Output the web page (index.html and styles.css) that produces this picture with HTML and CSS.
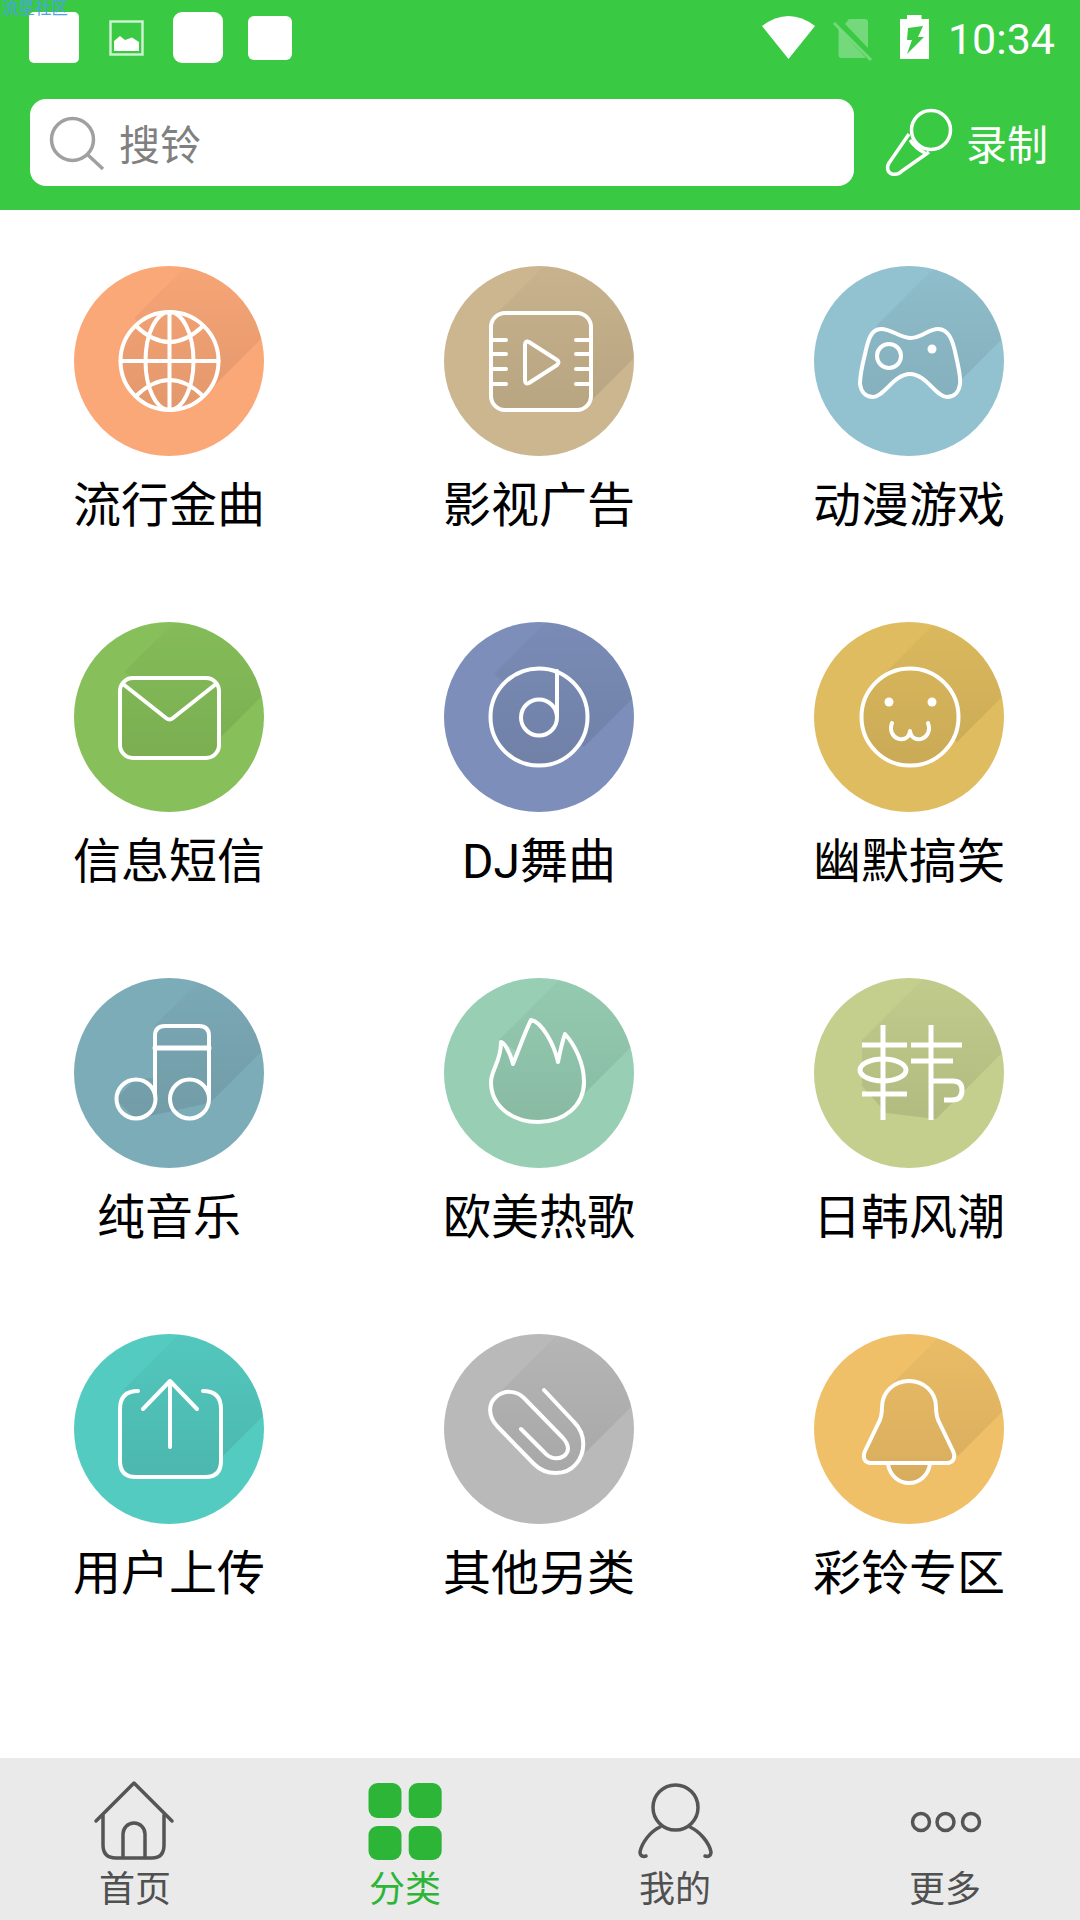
FILE: index.html
```html
<!DOCTYPE html>
<html lang="zh-CN">
<head>
<meta charset="utf-8">
<title>铃声分类</title>
<link rel="stylesheet" href="styles.css">
</head>
<body>
<div class="app">
  <header class="header">
    <span class="watermark">流星社区</span>
    <div class="status">
      <div class="status-left">
        <span class="slot"><span class="sq sq-a"></span></span>
        <span class="slot">
          <svg class="img-icon" viewBox="0 0 35 36"><rect class="img-frame" x="1.5" y="1.5" width="32" height="33"/><path class="white" d="M5 31V21L11 16L16 20L23 17.5L30 22V31Z"/></svg>
        </span>
        <span class="slot"><span class="sq sq-b"></span></span>
        <span class="slot"><span class="sq sq-c"></span></span>
      </div>
      <div class="status-right">
        <svg class="st-wifi" viewBox="0 0 53 43"><path class="white" d="M0 10Q26.500 -10 53 10L26.500 43Z"/></svg>
        <svg class="st-sim" viewBox="0 0 40 44"><path class="faded" d="M12 7L16 2H32Q35 2 35 5V31Z"/><path class="faded" d="M5.500 12V38Q5.500 41 8.500 41H33Z"/><path class="faded-line" d="M1 6L38 43"/></svg>
        <svg class="st-batt" viewBox="0 0 29 44"><path class="white" fill-rule="evenodd" d="M7 0H21.500V4H29V44H0V4H7ZM8 13L7 25H12L7 39L24 22H18L23 11Z"/></svg>
        <span class="clock">10:34</span>
      </div>
    </div>
    <div class="search-row">
      <div class="search">
        <svg class="search-icon" viewBox="0 0 54 52"><circle class="search-line" cx="22.500" cy="22.500" r="21"/><path class="search-line" d="M38 38L53 52"/></svg>
        <span class="search-text">搜铃</span>
      </div>
      <div class="record">
        <svg class="mic" viewBox="0 0 68 68"><circle class="mic-line" cx="45" cy="21" r="19.500"/><path class="mic-line" d="M23 25L3 54C0 59 2 64 6 65C10 66 13 65 16 62L43 43M24 31C28 37 33 41 39 44"/></svg>
        <span class="record-text">录制</span>
      </div>
    </div>
  </header>

  <main class="grid">
    <div class="cat">
      <svg class="disc" viewBox="0 0 190 190">
        <defs>
          <linearGradient id="shade" gradientUnits="userSpaceOnUse" x1="0" y1="0" x2="0" y2="150"><stop offset="0" stop-color="#000" stop-opacity=".02"/><stop offset="1" stop-color="#000" stop-opacity=".1"/></linearGradient>
          <clipPath id="round"><circle cx="95" cy="95" r="95"/></clipPath>
          <clipPath id="s1"><polygon points="60,52 190,-78 260,0 130,130"/><circle cx="95.500" cy="95" r="49"/></clipPath>
          <clipPath id="s2"><polygon points="50,50 180,-80 277,5 147,135"/><rect x="47" y="47" width="100" height="97" rx="14"/></clipPath>
          <clipPath id="s3"><polygon points="62,60 192,-70 276,-15 146,115"/><path d="M67 63C78 63 86 72 97 72C108 72 114 63 124 63C135 63 139 75 142 90C145 103 147 112 146 118C145 126 140 131 133 131C122 131 112 108 96 108C80 108 70 131 59 131C52 131 47 126 46 118C46 110 48 100 51 88C54 74 57 63 67 63Z"/></clipPath>
          <clipPath id="s4"><polygon points="50,50 180,-80 275,-13 145,117"/><rect x="46" y="56" width="99" height="80" rx="13"/></clipPath>
          <clipPath id="s5"><polygon points="50,52 180,-78 270,-5 140,125"/><circle cx="95" cy="95" r="48.500"/></clipPath>
          <clipPath id="s6"><polygon points="62,60 192,-70 273,-10 143,120"/><circle cx="96" cy="95" r="48.500"/></clipPath>
          <clipPath id="s7"><polygon points="80,48 210,-82 266,-5 136,125"/><polygon points="81,48 135,48 135,125 62,141 41,121 62,101 81,100"/></clipPath>
          <clipPath id="s8"><polygon points="55,62 185,-68 270,-14 140,116"/><path d="M94 144C68 144 47 128 47 104C47 92 57 84 57 64C60 64 66 74 69 86C74 74 80 56 87 42C98 44 110 66 114 84C116 74 118 64 121 56C130 66 140 84 140 104C140 128 120 144 94 144Z"/></clipPath>
          <clipPath id="s9"><polygon points="48,62 178,-68 252,11 122,141"/><polygon points="48,62 48,108 72,135 122,141"/></clipPath>
          <clipPath id="s10"><polygon points="50,55 180,-75 276,-5 146,125"/><rect x="46" y="57" width="101" height="86" rx="16"/></clipPath>
          <clipPath id="s11"><polygon points="52,62 182,-68 272,-12 142,118"/><path d="M100 56L130 88C142 100 142 118 132 130C122 142 102 142 90 130L53 92C44 82 44 70 52 63C60 56 72 56 80 64Z"/></clipPath>
          <clipPath id="s12"><polygon points="78,50 208,-80 274,-8 144,122"/><path d="M95 47C110 47 122 58 122 73C122 80 123 85 126 90L139 117C142 124 139 129 133 129H116C114 142 105 149 95 149C85 149 76 142 74 129H57C51 129 48 124 51 117L64 90C67 85 68 80 68 73C68 58 80 47 95 47Z"/></clipPath>
        </defs>
        <circle class="c1" cx="95" cy="95" r="95"/>
        <g clip-path="url(#round)"><rect width="190" height="190" fill="url(#shade)" clip-path="url(#s1)"/></g>
        <circle class="line" cx="95.500" cy="95" r="49"/>
        <ellipse class="line" cx="95.500" cy="95" rx="24" ry="49"/>
        <path class="line" d="M95.500 46V144M46.500 95H144.500M62 60Q95.500 92 129 60M62 130Q95.500 98 129 130"/>
      </svg>
      <span class="label">流行金曲</span>
    </div>
    <div class="cat">
      <svg class="disc" viewBox="0 0 190 190">
        <circle class="c2" cx="95" cy="95" r="95"/>
        <g clip-path="url(#round)"><rect width="190" height="190" fill="url(#shade)" clip-path="url(#s2)"/></g>
        <rect class="line" x="47" y="47" width="100" height="97" rx="14"/>
        <path class="line" d="M47 74H62M47 88H62M47 103H62M47 118H62M132 74H147M132 88H147M132 103H147M132 118H147"/>
        <path class="line" d="M81 79Q81 74 85 76L113 94Q116 96 113 99L85 117Q81 119 81 114Z"/>
      </svg>
      <span class="label">影视广告</span>
    </div>
    <div class="cat">
      <svg class="disc" viewBox="0 0 190 190">
        <circle class="c3" cx="95" cy="95" r="95"/>
        <g clip-path="url(#round)"><rect width="190" height="190" fill="url(#shade)" clip-path="url(#s3)"/></g>
        <path class="line" d="M67 63C78 63 86 72 97 72C108 72 114 63 124 63C135 63 139 75 142 90C145 103 147 112 146 118C145 126 140 131 133 131C122 131 112 108 96 108C80 108 70 131 59 131C52 131 47 126 46 118C46 110 48 100 51 88C54 74 57 63 67 63Z"/>
        <circle class="line" cx="75" cy="90" r="12"/>
        <circle class="white" cx="118" cy="83" r="4.500"/>
      </svg>
      <span class="label">动漫游戏</span>
    </div>
    <div class="cat">
      <svg class="disc" viewBox="0 0 190 190">
        <circle class="c4" cx="95" cy="95" r="95"/>
        <g clip-path="url(#round)"><rect width="190" height="190" fill="url(#shade)" clip-path="url(#s4)"/></g>
        <rect class="line" x="46" y="56" width="99" height="80" rx="13"/>
        <path class="line" d="M49 62L92 96Q95.500 99 99 96L142 62"/>
      </svg>
      <span class="label">信息短信</span>
    </div>
    <div class="cat">
      <svg class="disc" viewBox="0 0 190 190">
        <circle class="c5" cx="95" cy="95" r="95"/>
        <g clip-path="url(#round)"><rect width="190" height="190" fill="url(#shade)" clip-path="url(#s5)"/></g>
        <circle class="line" cx="95" cy="95" r="48.500"/>
        <circle class="line" cx="95" cy="95.500" r="18"/>
        <path class="line" d="M113 95V49"/>
      </svg>
      <span class="label">DJ舞曲</span>
    </div>
    <div class="cat">
      <svg class="disc" viewBox="0 0 190 190">
        <circle class="c6" cx="95" cy="95" r="95"/>
        <g clip-path="url(#round)"><rect width="190" height="190" fill="url(#shade)" clip-path="url(#s6)"/></g>
        <circle class="line" cx="96" cy="95" r="48.500"/>
        <circle class="white" cx="75" cy="80" r="4.500"/>
        <circle class="white" cx="118" cy="80" r="4.500"/>
        <path class="line" d="M78 101C72 117 94 124 96 109C98 124 120 117 114 101"/>
      </svg>
      <span class="label">幽默搞笑</span>
    </div>
    <div class="cat">
      <svg class="disc" viewBox="0 0 190 190">
        <circle class="c7" cx="95" cy="95" r="95"/>
        <g clip-path="url(#round)"><rect width="190" height="190" fill="url(#shade)" clip-path="url(#s7)"/></g>
        <path class="line" d="M81 118V58Q81 48 91 48H125Q135 48 135 58V118"/>
        <path class="line line-thick" d="M81 70H135"/>
        <circle class="line" cx="62" cy="121" r="19.500"/>
        <circle class="line" cx="115.500" cy="121" r="19.500"/>
      </svg>
      <span class="label">纯音乐</span>
    </div>
    <div class="cat">
      <svg class="disc" viewBox="0 0 190 190">
        <circle class="c8" cx="95" cy="95" r="95"/>
        <g clip-path="url(#round)"><rect width="190" height="190" fill="url(#shade)" clip-path="url(#s8)"/></g>
        <path class="line" d="M94 144C68 144 47 128 47 104C47 92 57 84 57 64C60 64 66 74 69 86C74 74 80 56 87 42C98 44 110 66 114 84C116 74 118 64 121 56C130 66 140 84 140 104C140 128 120 144 94 144Z"/>
      </svg>
      <span class="label">欧美热歌</span>
    </div>
    <div class="cat">
      <svg class="disc" viewBox="0 0 190 190">
        <circle class="c9" cx="95" cy="95" r="95"/>
        <g clip-path="url(#round)"><rect width="190" height="190" fill="url(#shade)" clip-path="url(#s9)"/></g>
        <ellipse class="line-han" cx="69" cy="92" rx="23" ry="11"/>
        <path class="line-han" d="M48 67H93M69 47V142M48 116H93M97 67H148M97 83H139M117 47V142M117 103H139Q148 103 148 112Q148 122 138 122H130"/>
      </svg>
      <span class="label">日韩风潮</span>
    </div>
    <div class="cat">
      <svg class="disc" viewBox="0 0 190 190">
        <circle class="c10" cx="95" cy="95" r="95"/>
        <g clip-path="url(#round)"><rect width="190" height="190" fill="url(#shade)" clip-path="url(#s10)"/></g>
        <path class="line" d="M64 57Q46 57 46 75V127Q46 143 62 143H131Q147 143 147 127V75Q147 57 129 57"/>
        <path class="line" d="M96 113V47M69 75L96 47L123 75"/>
      </svg>
      <span class="label">用户上传</span>
    </div>
    <div class="cat">
      <svg class="disc" viewBox="0 0 190 190">
        <circle class="c11" cx="95" cy="95" r="95"/>
        <g clip-path="url(#round)"><rect width="190" height="190" fill="url(#shade)" clip-path="url(#s11)"/></g>
        <path class="line" d="M100 56L130 88C142 100 142 118 132 130C122 142 102 142 90 130L53 92C44 82 44 70 52 63C60 56 72 56 80 64L119 104C126 112 125 118 120 122C114 126 106 125 100 118L77 95"/>
      </svg>
      <span class="label">其他另类</span>
    </div>
    <div class="cat">
      <svg class="disc" viewBox="0 0 190 190">
        <circle class="c12" cx="95" cy="95" r="95"/>
        <g clip-path="url(#round)"><rect width="190" height="190" fill="url(#shade)" clip-path="url(#s12)"/></g>
        <path class="line" d="M95 47C110 47 122 58 122 73C122 80 123 85 126 90L139 117C142 124 139 129 133 129H57C51 129 48 124 51 117L64 90C67 85 68 80 68 73C68 58 80 47 95 47Z"/>
        <path class="line" d="M74 130C76 142 85 149 95 149C105 149 114 142 116 130"/>
      </svg>
      <span class="label">彩铃专区</span>
    </div>
  </main>

  <nav class="nav">
    <div class="tab">
      <svg class="tab-icon" viewBox="0 0 78 78"><g transform="translate(-1 0)"><path class="tab-line" d="M1 39L39 1L77 39M8 33V63Q8 76 21 76H57Q69 76 69 63V33M28 76V52A11 11 0 0 1 50 52V76"/></g></svg>
      <span class="tab-text">首页</span>
    </div>
    <div class="tab tab-active">
      <svg class="tab-icon" viewBox="0 0 78 78"><rect class="tile" x="2.500" y="1" width="33" height="35" rx="9"/><rect class="tile" x="42.700" y="1" width="33" height="35" rx="9"/><rect class="tile" x="2.500" y="44" width="33" height="34" rx="9"/><rect class="tile" x="42.700" y="44" width="33" height="34" rx="9"/></svg>
      <span class="tab-text">分类</span>
    </div>
    <div class="tab">
      <svg class="tab-icon" viewBox="0 0 78 78"><circle class="tab-line" cx="39.500" cy="25.500" r="22.500"/><path class="tab-line" d="M24 45C15 49 6 60 4 70C4 74 7 75 10 74M54 45C63 49 73 60 75 70C75 74 72 75 69 74"/></svg>
      <span class="tab-text">我的</span>
    </div>
    <div class="tab">
      <svg class="tab-icon" viewBox="0 0 78 78"><circle class="tab-line" cx="15" cy="40" r="8.500"/><circle class="tab-line" cx="39.500" cy="40" r="8.500"/><circle class="tab-line" cx="65" cy="40" r="8.500"/></svg>
      <span class="tab-text">更多</span>
    </div>
  </nav>
</div>
</body>
</html>
```

FILE: styles.css
```css
* { box-sizing: border-box; }
html, body { margin: 0; padding: 0; background: #fff; }
body { font-family: Roboto, "Noto Sans CJK SC", sans-serif; }
svg { display: block; overflow: visible; }

.app { width: 1080px; height: 1920px; display: flex; flex-direction: column; overflow: hidden; }

/* header */
.header { position: relative; height: 210px; background: #39c942; flex: none; }
.watermark { position: absolute; left: 2px; top: 0; font-size: 16.500px; line-height: 17px; color: #4aa3e6; z-index: 2; }
.status { height: 75px; display: flex; justify-content: space-between; align-items: center; padding: 0 25px 0 18px; }
.status-left { display: flex; align-items: center; }
.slot { width: 72px; display: flex; justify-content: center; }
.sq { display: block; background: #fff; }
.sq-a { width: 50px; height: 51px; border-radius: 5px; }
.sq-b { width: 50px; height: 51px; border-radius: 9px; }
.sq-c { width: 44px; height: 44px; border-radius: 6px; }
.img-icon { width: 35px; height: 36px; }
.img-frame { fill: none; stroke: #fff; stroke-opacity: .75; stroke-width: 2.500; }
.white { fill: #fff; }
.faded { fill: #fff; fill-opacity: .3; }
.faded-line { fill: none; stroke: #fff; stroke-opacity: .3; stroke-width: 3; }
.status-right { display: flex; align-items: center; }
.st-wifi { width: 53px; height: 43px; margin-right: 18px; }
.st-sim { width: 40px; height: 44px; margin-right: 27px; margin-top: 2px; }
.st-batt { width: 29px; height: 44px; margin-right: 19px; margin-top: -1px; }
.clock { font-size: 43px; line-height: 50px; color: #fff; margin-top: 2px; }

.search-row { display: flex; align-items: flex-start; margin-top: 24px; padding-left: 30px; }
.search { width: 824px; height: 87px; background: #fff; border-radius: 16px; display: flex; align-items: center; padding-left: 20px; }
.search-icon { width: 54px; height: 52px; flex: none; }
.search-line { fill: none; stroke: #a0a0a0; stroke-width: 3.500; }
.search-text { font-size: 41px; line-height: 48px; color: #808080; margin-left: 15px; margin-top: 6px; }
.record { display: flex; align-items: flex-start; margin-left: 32px; padding-top: 10px; }
.mic { width: 68px; height: 68px; flex: none; }
.mic-line { fill: none; stroke: #fff; stroke-width: 3.500; stroke-linejoin: round; }
.record-text { font-size: 41px; line-height: 48px; color: #fff; margin-left: 12px; margin-top: 13px; white-space: nowrap; }

/* category grid */
.grid { flex: 1; display: grid; grid-template-columns: repeat(3, 190px); justify-content: space-between; align-content: start; row-gap: 92px; padding: 56px 76px 0 74px; }
.cat { display: flex; flex-direction: column; align-items: center; }
.disc { width: 190px; height: 190px; flex: none; }
.label { margin-top: 26px; font-size: 48px; line-height: 48px; color: #000; white-space: nowrap; }
.line { fill: none; stroke: #fff; stroke-width: 4; stroke-linecap: round; stroke-linejoin: round; }
.line-thick { stroke-width: 5; }
.line-han { fill: none; stroke: #fff; stroke-width: 5; }
.c1 { fill: #fba878; }
.c2 { fill: #cbb68f; }
.c3 { fill: #92c1cf; }
.c4 { fill: #87c05a; }
.c5 { fill: #7c8eb9; }
.c6 { fill: #dfbc5f; }
.c7 { fill: #7dacb9; }
.c8 { fill: #97ceb4; }
.c9 { fill: #c4cf8e; }
.c10 { fill: #54cbc1; }
.c11 { fill: #b9b9b9; }
.c12 { fill: #efc068; }

/* bottom nav */
.nav { height: 162px; flex: none; background: #eaeaea; display: grid; grid-template-columns: repeat(4, 1fr); }
.tab { display: flex; flex-direction: column; align-items: center; padding-top: 24px; color: #505050; }
.tab-icon { width: 78px; height: 78px; flex: none; }
.tab-line { fill: none; stroke: #555; stroke-width: 3.500; stroke-linecap: round; stroke-linejoin: round; }
.tile { fill: #2db537; }
.tab-text { font-size: 36px; line-height: 44px; margin-top: 8px; }
.tab-active { color: #2db537; }
```
